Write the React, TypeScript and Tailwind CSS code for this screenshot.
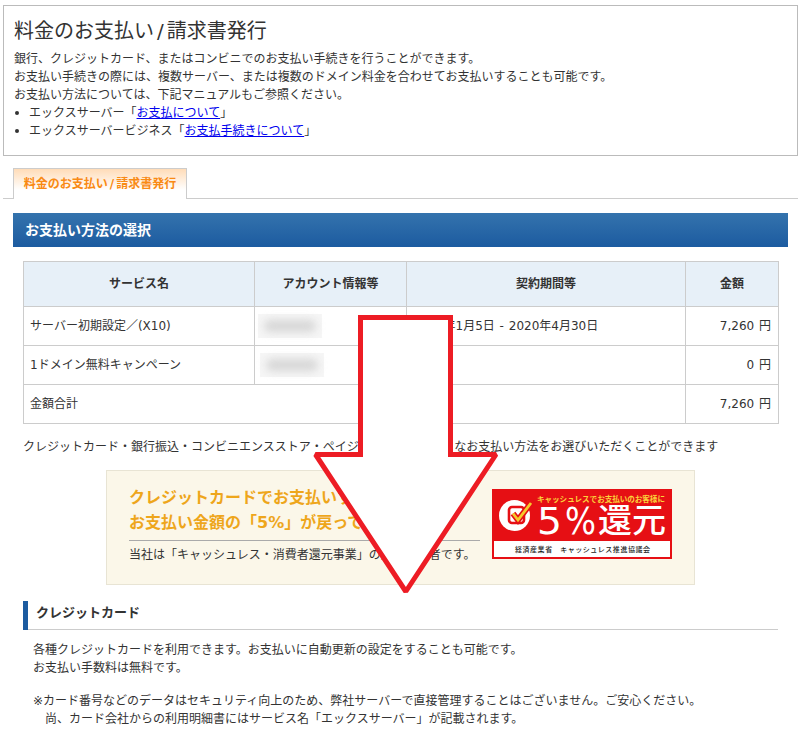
import React from "react";

const font = "font-['DejaVu_Sans','Noto_Sans_CJK_JP',sans-serif]";

const Blurred = () => (
  <div className="w-[64px] h-[24px] bg-[#f6f6f6] flex items-center justify-center">
    <div className="w-[52px] h-[12px] bg-[#d6d6d6] rounded-full blur-[4px]" />
  </div>
);

const Logo = () => (
  <svg width="180" height="70" viewBox="0 0 180 70" className="shrink-0">
    <rect width="180" height="70" fill="#e60f14" />
    <text x="45" y="12.5" fontSize="7.6" fontWeight="700" fill="#fbd33a" fontFamily="Noto Sans CJK JP" textLength="128">
      キャッシュレスでお支払いのお客様に
    </text>
    {/* cashless mark */}
    <circle cx="22.5" cy="26.5" r="15.5" fill="#fff" />
    <rect x="17" y="18" width="15" height="16" rx="3" fill="#fff" stroke="#e60f14" strokeWidth="2.6" />
    <path d="M21 24.5l5 6.5 13-17" fill="none" stroke="#e60f14" strokeWidth="6" />
    <path d="M21 24.5l5 6.5 13-17" fill="none" stroke="#f5c92c" strokeWidth="2.8" />
    <text x="45" y="44.5" fontSize="38" fill="#fff" fontFamily="DejaVu Sans" textLength="25" lengthAdjust="spacingAndGlyphs">5</text>
    <text x="73" y="44.5" fontSize="38" fill="#fff" fontFamily="DejaVu Sans" textLength="31" lengthAdjust="spacingAndGlyphs">%</text>
    <text x="106" y="43" fontSize="33" fontWeight="500" fill="#fff" fontFamily="Noto Sans CJK JP" textLength="68" lengthAdjust="spacingAndGlyphs">還元</text>
    <rect x="2" y="52" width="176" height="16" fill="#fff" />
    <text x="23" y="63" fontSize="7" fontWeight="500" fill="#222" fontFamily="Noto Sans CJK JP" textLength="135">
      経済産業省　キャッシュレス推進協議会
    </text>
  </svg>
);

const Bullet = () => <span className="ml-[1px] mr-[10px] w-[4px] h-[4px] rounded-full bg-[#333] self-center" />;

export default function App() {
  return (
    <div className={`${font} relative w-[802px] h-[741px] overflow-hidden bg-white text-[12px] leading-[18px] text-[#333]`}>
      {/* intro box */}
      <div className="mt-[5px] mx-[3px] w-[795px] h-[151px] border border-[#bbb] pl-[10px] pt-[10px]">
        <h1 className="text-[20px] leading-[30px] font-normal mb-[4px]">
          料金のお支払い<span className="px-[3px]">/</span>請求書発行
        </h1>
        <p>銀行、クレジットカード、またはコンビニでのお支払い手続きを行うことができます。</p>
        <p>お支払い手続きの際には、複数サーバー、または複数のドメイン料金を合わせてお支払いすることも可能です。</p>
        <p>お支払い方法については、下記マニュアルもご参照ください。</p>
        <ul>
          <li className="flex">
            <Bullet />エックスサーバー「<a className="text-[#0000ee] underline">お支払について</a>」
          </li>
          <li className="flex">
            <Bullet />エックスサーバービジネス「<a className="text-[#0000ee] underline">お支払手続きについて</a>」
          </li>
        </ul>
      </div>

      {/* tab */}
      <div className="mt-[12px] mx-[3px] w-[795px] h-[31px] border-b border-[#ccc] pl-[10px]">
        <div className="w-[174px] h-[31px] border border-b-0 border-[#ccc] bg-linear-to-b from-[#ffdcb8] via-white via-70% to-white flex items-center justify-center font-bold text-[#f98a14]">
          料金のお支払い<span className="px-[2px]">/</span>請求書発行
        </div>
      </div>

      {/* section header */}
      <div className="mt-[14px] ml-[13px] w-[775px] h-[34px] bg-linear-to-b from-[#3473ad] to-[#1c5ba0] flex items-center pl-[12px] text-[14px] font-bold text-white">
        お支払い方法の選択
      </div>

      {/* order table */}
      <table className="mt-[14px] ml-[23px] w-[755px] table-fixed border-collapse border border-[#ccc]">
        <colgroup>
          <col className="w-[231px]" />
          <col className="w-[152px]" />
          <col className="w-[279px]" />
          <col className="w-[93px]" />
        </colgroup>
        <thead>
          <tr className="h-[45px] bg-[#e7f0f8] font-bold">
            <th className="border border-[#ccc]">サービス名</th>
            <th className="border border-[#ccc]">アカウント情報等</th>
            <th className="border border-[#ccc]">契約期間等</th>
            <th className="border border-[#ccc]">金額</th>
          </tr>
        </thead>
        <tbody>
          <tr className="h-[39px]">
            <td className="border border-[#ccc] px-[6px]">サーバー初期設定／(X10)</td>
            <td className="border border-[#ccc] pl-[3px]"><Blurred /></td>
            <td className="border border-[#ccc] px-[6px] [word-spacing:1px]">2020年1月5日 - 2020年4月30日</td>
            <td className="border border-[#ccc] pl-[6px] pr-[7px] text-right [word-spacing:1px]">7,260 円</td>
          </tr>
          <tr className="h-[39px]">
            <td className="border border-[#ccc] px-[6px]">1ドメイン無料キャンペーン</td>
            <td className="border border-[#ccc] pl-[5px]"><Blurred /></td>
            <td className="border border-[#ccc] px-[6px]"></td>
            <td className="border border-[#ccc] pl-[6px] pr-[7px] text-right [word-spacing:1px]">0 円</td>
          </tr>
          <tr className="h-[39px]">
            <td colSpan={3} className="border border-[#ccc] px-[6px]">金額合計</td>
            <td className="border border-[#ccc] pl-[6px] pr-[7px] text-right [word-spacing:1px]">7,260 円</td>
          </tr>
        </tbody>
      </table>

      <p className="mt-[14px] ml-[23px]">
        クレジットカード・銀行振込・コンビニエンスストア・ペイジーなど、さまざまなお支払い方法をお選びいただくことができます
      </p>

      {/* cashless banner */}
      <div className="mt-[14px] ml-[106px] w-[589px] h-[115px] bg-[#fbf7e9] border border-[#e8e4d4] flex items-start pl-[22px] pt-[14px]">
        <div className="w-[351px] shrink-0">
          <div className="text-[16px] leading-[25px] font-bold text-[#eea61b]">
            <div>クレジットカードでお支払いすると</div>
            <div>お支払い金額の「5%」が戻ってきます</div>
          </div>
          <div className="mt-[5px] border-t border-[#aaa] pt-[5px]">当社は「キャッシュレス・消費者還元事業」の登録事業者です。</div>
        </div>
        <div className="ml-[12px] mt-[4px]">
          <Logo />
        </div>
      </div>

      {/* credit card section */}
      <div className="mt-[16px] ml-[23px] w-[755px] h-[29px] border-l-[5px] border-[#1c5ba0] border-b-0 flex">
        <div className="flex-1 border-b border-[#ccc] pl-[8px] pt-[3px] text-[13px] font-bold">クレジットカード</div>
      </div>
      <div className="mt-[11px] ml-[33px]">
        <p>各種クレジットカードを利用できます。お支払いに自動更新の設定をすることも可能です。</p>
        <p>お支払い手数料は無料です。</p>
        <p className="mt-[15px]">※カード番号などのデータはセキュリティ向上のため、弊社サーバーで直接管理することはございません。ご安心ください。</p>
        <p className="pl-[12px]">尚、カード会社からの利用明細書にはサービス名「エックスサーバー」が記載されます。</p>
      </div>

      {/* red arrow annotation */}
      <svg width="802" height="741" className="absolute inset-0 pointer-events-none">
        <path
          d="M360.5 317.5H450.5V454.5H496L405.8 591.5L315.5 454.5H360.5Z"
          fill="#fff"
          stroke="#ed1c24"
          strokeWidth="5"
          strokeLinejoin="miter"
          strokeMiterlimit="1.5"
        />
      </svg>
    </div>
  );
}
